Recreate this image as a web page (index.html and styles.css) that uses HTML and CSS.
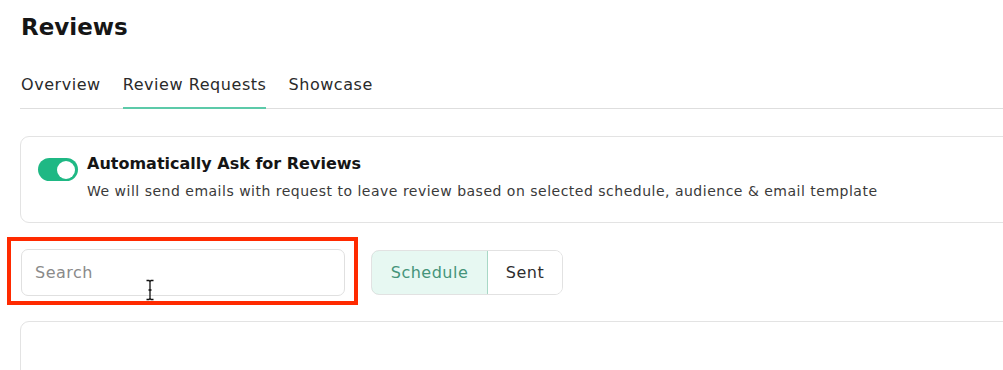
FILE: index.html
```html
<!DOCTYPE html>
<html lang="en">
<head>
    <meta charset="UTF-8">
    <title>Reviews</title>
    <link rel="stylesheet" href="styles.css">
</head>
<body>
    <section id="page">
        <h1 class="page-title">Reviews</h1>

        <nav class="tabs">
            <a class="tab">Overview</a>
            <a class="tab active">Review Requests</a>
            <a class="tab">Showcase</a>
        </nav>

        <div class="card auto-card">
            <span class="toggle on"><span class="knob"></span></span>
            <div class="auto-text">
                <div class="auto-title">Automatically Ask for Reviews</div>
                <div class="auto-desc">We will send emails with request to leave review based on selected schedule, audience &amp; email template</div>
            </div>
        </div>

        <div class="toolbar">
            <div class="highlight">
                <input type="text" class="search" placeholder="Search">
                <!-- text cursor -->
                <svg class="ibeam" width="10" height="22" viewBox="0 0 10 22">
                    <path d="M1.5 1.5h2.5l1 1 1-1h2.5M5 2.5v17M1.5 20.5h2.5l1-1 1 1h2.5M3.5 11h3" fill="none" stroke="#111" stroke-width="1.3"/>
                </svg>
            </div>
            <div class="segmented">
                <button class="seg active">Schedule</button>
                <button class="seg">Sent</button>
            </div>
        </div>

        <div class="card list-card"></div>
    </section>
</body>
</html>
```

FILE: styles.css
```css
*{
    margin: 0;
    padding: 0;
    box-sizing: border-box;
    font-family: "DejaVu Sans", "Open Sans", sans-serif;
}
body{
    background: #fff;
    color: #1a1a1a;
    overflow: hidden;
}
#page{
    padding: 11px 0 0 20px;
    width: 1040px;
}

.page-title{
    font-size: 23px;
    font-weight: 700;
    line-height: 32px;
    margin-left: 1px;
    color: #161616;
}

.tabs{
    display: flex;
    gap: 22px;
    margin-top: 29px;
    border-bottom: 1px solid #dedede;
    padding-left: 1px;
}
.tab{
    font-size: 16px;
    letter-spacing: 0.55px;
    line-height: 25px;
    padding-bottom: 10px;
    color: #2a2a2a;
    border-bottom: 2px solid transparent;
    margin-bottom: -1px;
}
.tab.active{
    border-bottom-color: #5ccaa9;
}

.card{
    border: 1px solid #e3e3e3;
    border-radius: 9px;
    background: #fff;
}
.auto-card{
    margin-top: 27px;
    height: 87px;
    display: flex;
    align-items: flex-start;
    gap: 9px;
    padding: 16px 17px;
}
.toggle{
    width: 40px;
    height: 23px;
    border-radius: 12px;
    background: #1fb884;
    display: flex;
    align-items: center;
    justify-content: flex-end;
    padding: 0 3px;
    margin-top: 5px;
    flex-shrink: 0;
}
.knob{
    width: 18px;
    height: 18px;
    border-radius: 50%;
    background: #fff;
}
.auto-title{
    font-size: 16px;
    font-weight: 700;
    line-height: 22px;
    color: #151515;
}
.auto-desc{
    font-size: 14px;
    letter-spacing: 0.5px;
    line-height: 20px;
    margin-top: 6px;
    color: #3a3a3a;
}

.toolbar{
    display: flex;
    align-items: flex-start;
    gap: 13px;
    margin: 14px 0 0 -13px;
}
.highlight{
    position: relative;
    border: 4px solid #ff2a00;
    padding: 8px 9px 5px 10px;
}
.search{
    display: block;
    width: 324px;
    height: 47px;
    border: 1px solid #e0e0e0;
    border-radius: 7px;
    padding: 0 13px;
    font-size: 16px;
    letter-spacing: 0.5px;
    color: #333;
    outline: none;
}
.search::placeholder{
    color: #8a8a8a;
}
.ibeam{
    position: absolute;
    left: 134px;
    top: 38px;
}
.segmented{
    display: flex;
    border: 1px solid #e2e2e2;
    border-radius: 8px;
    overflow: hidden;
    height: 45px;
    margin-top: 13px;
}
.seg{
    border: 0;
    background: #fff;
    font-size: 16px;
    letter-spacing: 0.5px;
    color: #2e2e2e;
}
.seg.active{
    background: #e7f8f2;
    color: #45947a;
    border: 1px solid #a8d8c6;
    border-radius: 8px 0 0 8px;
    margin: -1px 0 -1px -1px;
    width: 117px;
}
.seg:not(.active){
    width: 74px;
}

.list-card{
    margin-top: 16px;
    height: 80px;
}
```
